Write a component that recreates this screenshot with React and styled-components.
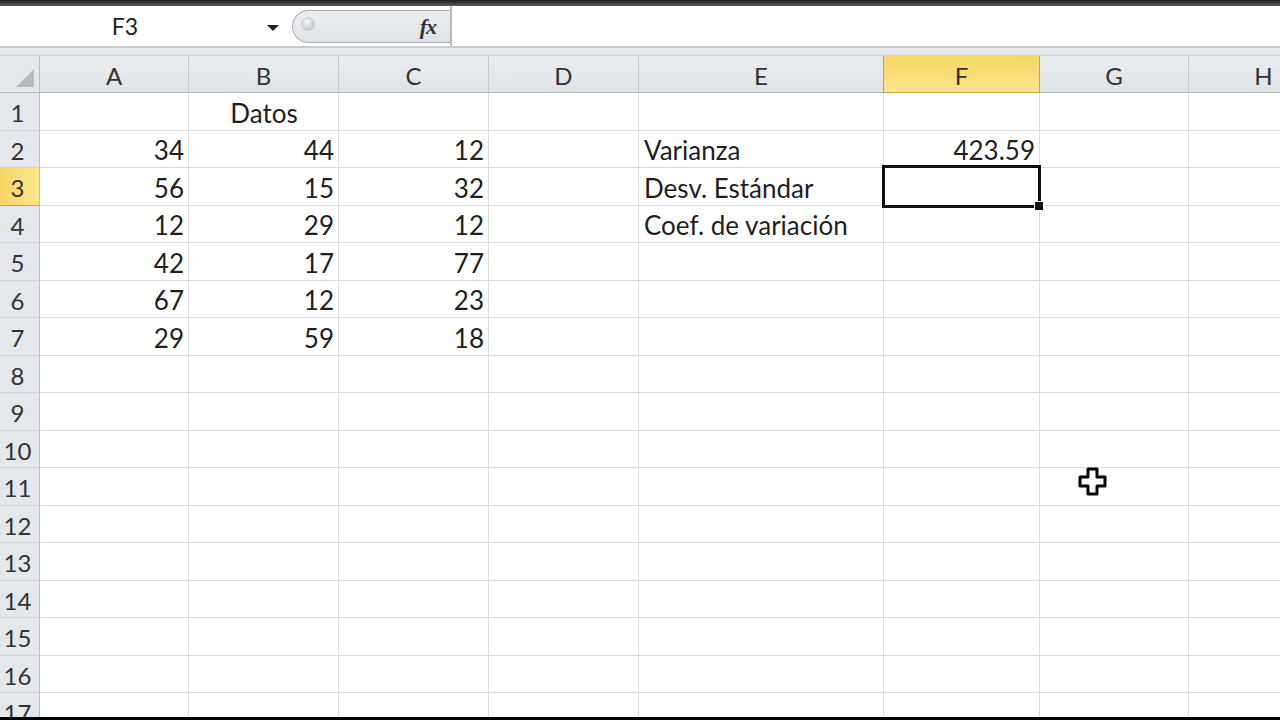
import React from "react";
import styled, { createGlobalStyle } from "styled-components";

const GlobalStyle = createGlobalStyle`
  html, body {
    margin: 0;
    padding: 0;
    background: #000;
    overflow: hidden;
  }
  * {
    box-sizing: border-box;
  }
`;

const COLS = [
  { name: "A", width: 149 },
  { name: "B", width: 150 },
  { name: "C", width: 150 },
  { name: "D", width: 150 },
  { name: "E", width: 245 },
  { name: "F", width: 156 },
  { name: "G", width: 149 },
  { name: "H", width: 150 },
];

const DATA = {
  1: { B: { v: "Datos", align: "center" } },
  2: { A: "34", B: "44", C: "12", E: { v: "Varianza", align: "left" }, F: "423.59" },
  3: { A: "56", B: "15", C: "32", E: { v: "Desv. Estándar", align: "left" } },
  4: { A: "12", B: "29", C: "12", E: { v: "Coef. de variación", align: "left" } },
  5: { A: "42", B: "17", C: "77" },
  6: { A: "67", B: "12", C: "23" },
  7: { A: "29", B: "59", C: "18" },
};

const SEL_COL = "F";
const SEL_ROW = 3;

const Screen = styled.div`
  width: 1280px;
  height: 720px;
  display: flex;
  flex-direction: column;
  background: #fff;
  font-family: Lato, "Open Sans", "Liberation Sans", sans-serif;
  color: #1f1f1f;
  position: relative;
  overflow: hidden;
`;

const TopEdge = styled.div`
  height: 6px;
  flex: none;
  background: linear-gradient(#1c1c1c, #5a5a5a);
`;

const FormulaBar = styled.div`
  height: 42px;
  flex: none;
  display: flex;
  align-items: stretch;
  background: #fff;
  border-bottom: 2px solid #c8ccd1;
`;

const NameBox = styled.div`
  width: 292px;
  display: flex;
  align-items: center;
  position: relative;
  font-size: 23px;
  color: #222;
`;

const NameText = styled.span`
  width: 250px;
  text-align: center;
`;

const DropArrow = styled.span`
  position: absolute;
  left: 267px;
  top: 19px;
  width: 0;
  height: 0;
  border-left: 6px solid transparent;
  border-right: 6px solid transparent;
  border-top: 6px solid #222;
`;

const Capsule = styled.div`
  width: 158px;
  margin: 4px 0 3px;
  background: linear-gradient(#eceef1, #dfe2e6);
  border: 1px solid #a9adb2;
  border-right: none;
  border-radius: 20px 0 0 20px;
  display: flex;
  align-items: center;
  justify-content: space-between;
  padding: 0 14px 0 8px;
`;

const Knob = styled.span`
  width: 14px;
  height: 14px;
  border-radius: 50%;
  background: radial-gradient(circle at 40% 35%, #f5f5f5, #b9bcc0);
  border: 1px solid #c9ccd0;
  margin-top: -6px;
`;

const Fx = styled.span`
  font-family: "Liberation Serif", serif;
  font-style: italic;
  font-weight: bold;
  font-size: 22px;
  color: #333;
  letter-spacing: -1px;
`;

const FormulaInput = styled.div`
  flex: 1;
  border-left: 2px solid #b8bcc1;
  background: #fff;
`;

const Gap = styled.div`
  height: 8px;
  flex: none;
  background: #e3e6ea;
  border-bottom: 1px solid #cfd3d8;
`;

const Sheet = styled.div`
  flex: 1;
  overflow: hidden;
`;

const Grid = styled.div`
  display: grid;
  grid-template-columns: 40px ${COLS.map((c) => c.width + "px").join(" ")};
  grid-template-rows: 37px;
  grid-auto-rows: 37.5px;
  width: max-content;
`;

const Corner = styled.div`
  background: #e4e7eb;
  border-right: 1px solid #b9bec4;
  border-bottom: 1px solid #b9bec4;
  position: relative;

  &::after {
    content: "";
    position: absolute;
    right: 5px;
    bottom: 5px;
    width: 0;
    height: 0;
    border-left: 18px solid transparent;
    border-bottom: 18px solid #b7bbc0;
  }
`;

const ColHead = styled.div`
  display: flex;
  align-items: center;
  justify-content: center;
  padding-top: 2px;
  font-size: 24px;
  color: #333;
  background: ${(p) =>
    p.$active ? "linear-gradient(#f8d665, #fde58c)" : "linear-gradient(#eaedf0, #dfe3e7)"};
  border-right: 1px solid ${(p) => (p.$active ? "#c9a443" : "#c3c8ce")};
  border-bottom: 1px solid ${(p) => (p.$active ? "#c9a443" : "#b3b9c0")};
  ${(p) => p.$active && "border-left: 1px solid #c9a443; margin-left: -1px;"}
`;

const RowHead = styled.div`
  display: flex;
  align-items: center;
  justify-content: center;
  padding-right: 4px;
  padding-top: 3px;
  font-size: 24px;
  color: #333;
  background: ${(p) =>
    p.$active ? "linear-gradient(90deg, #f8d665, #fde58c)" : "#e4e7eb"};
  border-right: 1px solid #b9bec4;
  border-bottom: 1px solid ${(p) => (p.$active ? "#c9a443" : "#d0d4d9")};
`;

const Cell = styled.div`
  display: flex;
  align-items: center;
  padding: 3px 4px 0 5px;
  font-size: 26px;
  white-space: nowrap;
  overflow: visible;
  justify-content: ${(p) =>
    p.$align === "left" ? "flex-start" : p.$align === "center" ? "center" : "flex-end"};
  border-right: 1px solid #dadcdf;
  border-bottom: 1px solid #dadcdf;
  position: relative;
`;

const Selection = styled.span`
  position: absolute;
  left: -2px;
  top: -3px;
  right: -2px;
  bottom: -3px;
  border: 3px solid #111;
  pointer-events: none;
  z-index: 2;

  &::after {
    content: "";
    position: absolute;
    right: -6px;
    bottom: -6px;
    width: 8px;
    height: 8px;
    background: #111;
    border: 1px solid #fff;
  }
`;

const BottomEdge = styled.div`
  height: 3px;
  flex: none;
  background: #000;
`;

const Cursor = styled.svg`
  position: absolute;
  left: 1078px;
  top: 467px;
  z-index: 5;
`;

function cellInfo(row, col) {
  const r = DATA[row];
  if (!r || r[col] == null) return { v: "", align: "right" };
  const c = r[col];
  return typeof c === "string" ? { v: c, align: "right" } : c;
}

export default function App() {
  const rows = Array.from({ length: 17 }, (_, i) => i + 1);
  return (
    <>
      <GlobalStyle />
      <Screen>
        <TopEdge />
        <FormulaBar>
          <NameBox>
            <NameText>F3</NameText>
            <DropArrow />
          </NameBox>
          <Capsule>
            <Knob />
            <Fx>fx</Fx>
          </Capsule>
          <FormulaInput />
        </FormulaBar>
        <Gap />
        <Sheet>
          <Grid>
            <Corner />
            {COLS.map((c) => (
              <ColHead key={c.name} $active={c.name === SEL_COL}>
                {c.name}
              </ColHead>
            ))}
            {rows.map((r) => (
              <React.Fragment key={r}>
                <RowHead $active={r === SEL_ROW}>{r}</RowHead>
                {COLS.map((c) => {
                  const info = cellInfo(r, c.name);
                  return (
                    <Cell key={c.name} $align={info.align}>
                      {info.v}
                      {r === SEL_ROW && c.name === SEL_COL && <Selection />}
                    </Cell>
                  );
                })}
              </React.Fragment>
            ))}
          </Grid>
        </Sheet>
        <BottomEdge />
        <Cursor width="30" height="30" viewBox="0 0 30 30">
          <path
            d="M10 2h9v8h8v9h-8v8h-9v-8H2v-9h8z"
            fill="#fff"
            stroke="#000"
            strokeWidth="3"
            strokeLinejoin="round"
          />
        </Cursor>
      </Screen>
    </>
  );
}
